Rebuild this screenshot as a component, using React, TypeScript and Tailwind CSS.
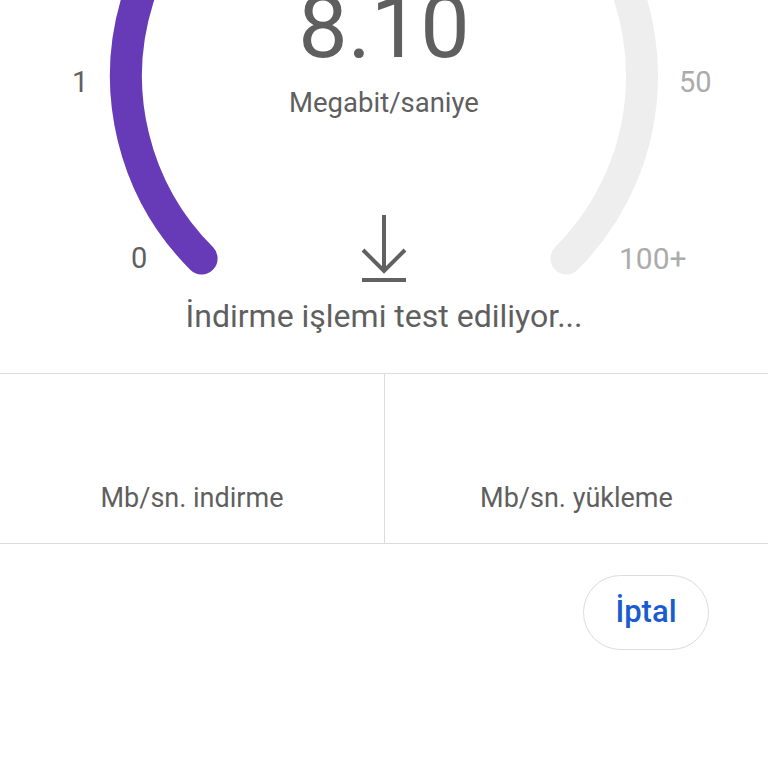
const CX = 384
const CY = 76
const R = 258

function polar(deg: number) {
    const rad = (deg * Math.PI) / 180
    return [CX + R * Math.cos(rad), CY - R * Math.sin(rad)]
}

// angles in math degrees, sweep clockwise from start to end
function arc(start: number, end: number) {
    const [x1, y1] = polar(start)
    const [x2, y2] = polar(end)
    const large = start - end > 180 ? 1 : 0
    return `M ${x1} ${y1} A ${R} ${R} 0 ${large} 1 ${x2} ${y2}`
}

function Gauge() {
    return (
        <svg className="absolute left-0 top-0" width={768} height={373} viewBox="0 0 768 373">
            <path d={arc(225, -45)} fill="none" stroke="#eeeeee" strokeWidth={32} strokeLinecap="round" />
            <path d={arc(225, 100)} fill="none" stroke="#673ab7" strokeWidth={32} strokeLinecap="round" />
        </svg>
    )
}

function DownloadIcon() {
    return (
        <svg width={48} height={68} viewBox="0 0 48 68" fill="none" stroke="#616161" strokeWidth={4}>
            <path d="M24 0 V56" />
            <path d="M3 35 L24 56 L45 35" />
            <path d="M2 65 H46" />
        </svg>
    )
}

export default function App() {
    return (
        <div className="w-[768px] h-[768px] overflow-hidden bg-white font-['Roboto',sans-serif] text-[#5f5f5f]">
            <div className="relative h-[373px]">
                <Gauge />

                <span className="absolute left-[72px] top-[68px] text-[29px] leading-none">1</span>
                <span className="absolute left-[131px] top-[244px] text-[29px] leading-none">0</span>
                <span className="absolute left-[679px] top-[68px] text-[29px] leading-none text-[#ababab]">50</span>
                <span className="absolute left-[619px] top-[244px] text-[30px] leading-none text-[#ababab]">100+</span>

                <div className="relative flex flex-col items-center">
                    <div className="mt-[-17px] text-[88px] leading-none">8.10</div>
                    <div className="mt-[18px] text-[27.5px] leading-none">Megabit/saniye</div>
                    <div className="mt-[98px]">
                        <DownloadIcon />
                    </div>
                    <div className="mt-[17px] text-[32px] leading-none">İndirme işlemi test ediliyor...</div>
                </div>
            </div>

            <div className="grid grid-cols-2 h-[171px] border-y border-[#dcdcdc]">
                <div className="flex items-end justify-center pb-[31px] text-[27px] leading-none">Mb/sn. indirme</div>
                <div className="flex items-end justify-center pb-[31px] border-l border-[#dcdcdc] text-[27px] leading-none">Mb/sn. yükleme</div>
            </div>

            <div className="flex justify-end pr-[59px] pt-[31px]">
                <button className="w-[126px] h-[75px] rounded-full border border-[#dadce0] text-[31px] font-medium text-[#1a5ccf]">
                    İptal
                </button>
            </div>
        </div>
    )
}
